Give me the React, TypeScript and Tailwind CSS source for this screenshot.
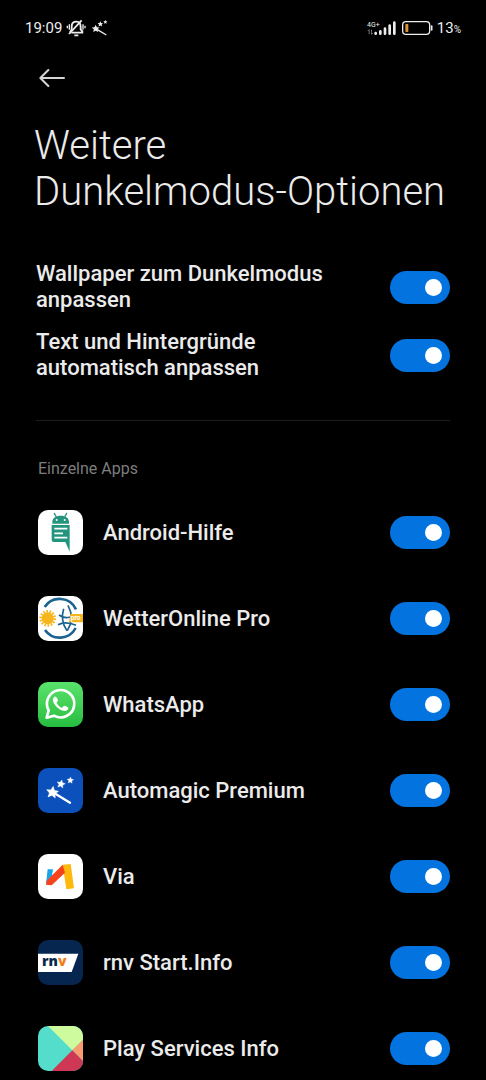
import { useState, type ReactNode } from "react";

const STAR = "M0-10 2.9-3.6 9.8-3 4.6 1.7 6 8.5 0 5-6 8.5-4.6 1.7-9.8-3-2.9-3.6Z";

function Toggle({ id }: { id: string }) {
  const [on, setOn] = useState(true);
  return (
    <input
      id={id}
      type="checkbox"
      role="switch"
      checked={on}
      onChange={(e) => setOn(e.target.checked)}
      className="flex h-[33px] w-[60px] shrink-0 cursor-pointer appearance-none items-center rounded-full bg-[#3a3a3a] px-2 before:block before:size-[17px] before:rounded-full before:bg-white before:content-[''] checked:justify-end checked:bg-[#0373df]"
    />
  );
}

function Icon({ viewBox, className, children }: { viewBox: string; className: string; children: ReactNode }) {
  return (
    <svg viewBox={viewBox} aria-hidden="true" className={`size-[45px] shrink-0 rounded-[10px] ${className}`}>
      {children}
    </svg>
  );
}

const androidHelp = (
  <Icon viewBox="24 24 135 135" className="bg-white">
    <g fill="#23957f">
      <path d="M67 65V60C67 48 77 41 92 41S117 48 117 60V65Z" />
      <path d="M65 69H119V149L106 120H71Q65 120 65 114Z" />
    </g>
    <path d="M79 45 73 34M104 45 110 34" stroke="#23957f" strokeWidth="4" strokeLinecap="round" />
    <circle cx="80" cy="54" r="3" fill="#fff" />
    <circle cx="104" cy="54" r="3" fill="#fff" />
    <path d="M73 80H112M73 94H99M73 107H112" stroke="#fff" strokeWidth="5" />
  </Icon>
);

const wetter = (
  <Icon viewBox="24 22 135 135" className="bg-white">
    <g fill="none" stroke="#1b6390">
      <path d="M44 55A54 54 0 0 1 138 62M137 118A54 54 0 0 1 45 124" strokeWidth="8" />
      <path d="M101 60C95 80 97 106 111 126M114 50C127 74 127 102 112 126M87 79C97 87 110 88 121 85M84 108C98 101 120 102 138 110" strokeWidth="5" />
    </g>
    <circle cx="53" cy="89" r="18" fill="#f6b51c" />
    <circle cx="53" cy="89" r="21" fill="none" stroke="#f6b51c" strokeWidth="8" strokeDasharray="5 4.42" />
    <path d="M121 76H159V101H117Z" fill="#f6b51c" />
    <text x="122" y="95" fill="#fff" fontSize="20" fontWeight="700" fontFamily="Roboto, sans-serif">pro</text>
  </Icon>
);

const whatsapp = (
  <Icon viewBox="24 24 135 135" className="bg-linear-to-b from-[#59e36c] to-[#25bd40]">
    <path d="M50 131 56 109A41 41 0 1 1 72 125Z" fill="none" stroke="#fff" strokeWidth="8" strokeLinejoin="round" />
    <path d="M77 68C74 67 70 71 69 76C67 89 87 111 104 111C110 111 116 106 115 101C114 99 105 95 103 95C100 95 98 101 95 101C89 99 82 91 80 86C81 83 84 82 84 79C83 76 80 69 77 68Z" fill="#fff" />
  </Icon>
);

const automagic = (
  <Icon viewBox="24 22 135 135" className="bg-[#0b50bb]">
    <path d="M76 99 120 126" stroke="#fff" strokeWidth="7" strokeLinecap="round" />
    <g fill="#fff" stroke="#fff" strokeWidth="1">
      <path d={STAR} transform="translate(67 95) scale(1.8) rotate(8)" />
      <path d={STAR} transform="translate(93 70) scale(1.25) rotate(12)" />
      <path d={STAR} transform="translate(121 59) scale(1) rotate(4)" />
    </g>
  </Icon>
);

const via = (
  <Icon viewBox="24 23 135 135" className="bg-white">
    <path d="M53 69H69L63 104 48 113Z" fill="#16a5e8" />
    <path d="M98 55 122 53 132 126 109 129Z" fill="#fdb90d" />
    <path d="M98 55 105 79 65 117 48 115 50 103Z" fill="#f6431a" />
  </Icon>
);

const rnv = (
  <Icon viewBox="24 21 135 135" className="bg-[#06264f]">
    <path d="M24 62H145L125 117H24Z" fill="#fff" />
    <text x="36" y="100" fontSize="42" fontWeight="800" fontFamily="'Open Sans', sans-serif" fill="#06264f">
      rn<tspan fill="#f07e1a">v</tspan>
    </text>
  </Icon>
);

const play = (
  <Icon viewBox="24 18 135 135" className="bg-[#54ddca]">
    <path d="M54 18H159V59L127 91Z" fill="#cdfb9d" />
    <path d="M127 91 159 59V123Z" fill="#fa9c70" />
    <path d="M127 91 159 123V153H65Z" fill="#ce3854" />
  </Icon>
);

const settings = [
  { id: "wallpaper", label: "Wallpaper zum Dunkelmodus anpassen" },
  { id: "text", label: "Text und Hintergründe automatisch anpassen" },
];

const apps = [
  { id: "android-hilfe", name: "Android-Hilfe", icon: androidHelp },
  { id: "wetter", name: "WetterOnline Pro", icon: wetter },
  { id: "whatsapp", name: "WhatsApp", icon: whatsapp },
  { id: "automagic", name: "Automagic Premium", icon: automagic },
  { id: "via", name: "Via", icon: via },
  { id: "rnv", name: "rnv Start.Info", icon: rnv },
  { id: "play", name: "Play Services Info", icon: play },
];

function StatusBar() {
  return (
    <div className="flex h-14 items-center justify-between px-[25px] text-[#ededed]">
      <div className="flex items-center">
        <span className="text-[15px]">19:09</span>
        <svg viewBox="0 0 60 54" className="ml-1 h-[18px] w-5" fill="none" stroke="currentColor" strokeWidth="5.5" aria-hidden="true">
          <path d="M16 41H49V37L44 31V24C44 14 39 8 31 8C22 8 17 14 17 23V31L12 40M25 49H37" />
          <path d="M47 4 9 45" />
          <path d="M10 16V32M4 20V28M51 16V32M57 20V28" strokeWidth="4" />
        </svg>
        <svg viewBox="0 0 48 48" className="ml-1.5 size-4" aria-hidden="true">
          <path d="M15 28 43 45" stroke="currentColor" strokeWidth="4" />
          <g fill="currentColor">
            <path d={STAR} transform="translate(11 26) scale(1.2)" />
            <path d={STAR} transform="translate(25 12) scale(.85)" />
            <path d={STAR} transform="translate(40 6) scale(.65)" />
          </g>
        </svg>
      </div>
      <div className="flex items-center">
        <div className="flex items-end">
          <div className="flex flex-col items-start">
            <span className="text-[7px] leading-[8px]">4G+</span>
            <svg viewBox="0 0 18 18" className="h-[6px] w-[7px]" fill="none" stroke="#888" strokeWidth="2.5" aria-hidden="true">
              <path d="M5 16V2L1 6M12 2V16L16 12" />
            </svg>
          </div>
          <svg viewBox="0 0 66 42" className="-ml-1.5 h-[14px] w-[22px]" fill="none" stroke="currentColor" strokeWidth="8" strokeLinecap="round" aria-hidden="true">
            <path d="M5 36V38M19 31V38M33 23V38M47 14V38M61 5V38" />
          </svg>
        </div>
        <svg viewBox="0 0 93 42" className="ml-[6px] h-[14px] w-[31px]" aria-hidden="true">
          <rect x="2" y="2" width="81" height="38" rx="10" fill="none" stroke="currentColor" strokeWidth="4" />
          <rect x="10" y="9" width="9" height="24" rx="2" fill="#dc9437" />
          <path d="M89 15V27" stroke="currentColor" strokeWidth="5" strokeLinecap="round" />
        </svg>
        <span className="ml-1 text-[15px]">
          13<span className="text-[10px]">%</span>
        </span>
      </div>
    </div>
  );
}

export default function App() {
  return (
    <div className="min-h-screen bg-black font-['Roboto',sans-serif] text-[#ebebeb]">
      <StatusBar />
      <header className="px-[34px]">
        <button type="button" aria-label="Zurück" className="flex h-11 w-9 items-center justify-center">
          <svg viewBox="0 0 78 54" className="h-[18px] w-[26px]" fill="none" stroke="#d4d4d4" strokeWidth="6" strokeLinecap="round" strokeLinejoin="round" aria-hidden="true">
            <path d="M75 27H4M28 3 4 27 28 51" />
          </svg>
        </button>
        <h1 className="mt-[23px] text-[40px] leading-[46px] font-light">
          Weitere
          <br />
          Dunkelmodus-Optionen
        </h1>
      </header>
      <main className="px-9 pt-[46px]">
        <ul className="flex flex-col gap-4">
          {settings.map((s) => (
            <li key={s.id} className="flex items-center justify-between gap-10">
              <label htmlFor={s.id} className="text-[22px] leading-[26px] font-medium">
                {s.label}
              </label>
              <Toggle id={s.id} />
            </li>
          ))}
        </ul>
        <hr className="mt-[39px] border-[#1c1c1c]" />
        <h2 className="mt-[38px] pl-0.5 text-base leading-5 text-[#7d7d7d]">Einzelne Apps</h2>
        <ul className="mt-[31px] flex flex-col gap-[41px]">
          {apps.map((a) => (
            <li key={a.id} className="flex items-center pl-0.5">
              {a.icon}
              <label htmlFor={a.id} className="ml-5 flex-1 text-[22px] leading-[26px] font-medium">
                {a.name}
              </label>
              <Toggle id={a.id} />
            </li>
          ))}
        </ul>
      </main>
    </div>
  );
}
